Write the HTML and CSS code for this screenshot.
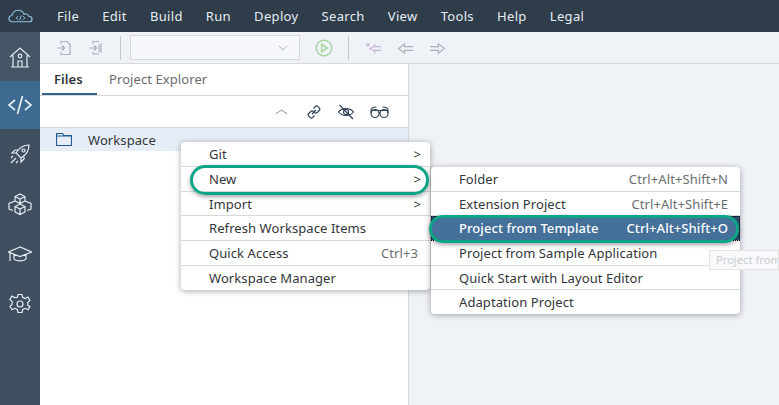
FILE: index.html
```html
<!DOCTYPE html>
<html lang="en">
<head>
  <meta charset="UTF-8">
  <title>Web IDE</title>
  <link rel="stylesheet" href="styles.css">
</head>
<body>
  <header class="menubar">
    <svg class="logo" viewBox="0 0 26 14"><path d="M6 13H4.500C2.500 13 1 11.500 1 9.700 1 8 2.300 6.700 4 6.500 5 3 7.500 1 10.500 1 13.500 1 15.800 2.800 16.700 5.200 17.300 4.900 18 4.800 18.800 4.900 20.500 5.100 21.500 6.200 21.800 7.300 23.700 7.500 25 8.700 25 10.300 25 11.900 23.500 13 22 13Z"/><path d="M10.500 7 8.500 9l2 2M15.500 7l2 2-2 2M13.800 6.500l-1.600 5" stroke-width="1"/></svg>
    <nav class="menus">
      <span>File</span><span>Edit</span><span>Build</span><span>Run</span><span>Deploy</span><span>Search</span><span>View</span><span>Tools</span><span>Help</span><span>Legal</span>
    </nav>
  </header>
  <div class="body-row">
    <aside class="sidebar">
      <div class="side-item home">
        <svg viewBox="0 0 24 24"><path d="M2 12 12 3l10 9M5 10.500V22h14V10.500M10 22v-6h4v6M3 22h18"/><circle cx="12" cy="11" r="1.800"/></svg>
      </div>
      <div class="side-item active">
        <svg viewBox="0 0 24 24"><path d="M7 7 1 12l6 5M17 7l6 5-6 5M14.500 3l-5 18" stroke-width="1.700"/></svg>
      </div>
      <div class="side-item">
        <svg viewBox="0 0 24 24"><path d="M21 3c-6 0-10 3-13 8l5 5c5-3 8-7 8-13ZM8 11H4l3-3h4M13 16v4l3-3v-4"/><circle cx="15.500" cy="8.500" r="1.500"/><path d="M3 21l5-5M3 16l2-2M8 21l2-2"/></svg>
      </div>
      <div class="side-item">
        <svg viewBox="0 0 24 24"><path d="M12 2 17 4.500V9l-5 2.500L7 9V4.500ZM7 4.500l5 2.500 5-2.500M12 7v4.500M7 9 1 11.500V17l4 1.500M17 9l6 2.500V17l-4 1.500M12 12 7 14.500V20l5 2.500 5-2.500v-5.500ZM7 14.500 12 17l5-2.500M12 17v5.500"/></svg>
      </div>
      <div class="side-item">
        <svg viewBox="0 0 24 24"><path d="M12 5 .5 10 12 14.500 23.500 10ZM6 12.500V17c2 2.500 10 2.500 12 0v-4.500M2 11v8"/></svg>
      </div>
      <div class="side-item">
        <svg viewBox="0 0 24 24"><circle cx="12" cy="12" r="3"/><path d="M10 2h4l.7 3 2.500 1.100 2.700-1.600 2 3.400-2.200 2.100v2.800L22 13.900l-2 3.400-2.700-1.500-2.600 1.200-.7 3h-4l-.7-3-2.600-1.200L4 17.300l-2-3.400 2.100-2.100V9L1.900 6.900l2-3.400 2.700 1.600L9.300 5Z" transform="translate(0 .5)"/></svg>
      </div>
    </aside>
    <main class="workarea">
      <div class="toolbar">
        <svg class="tool first" viewBox="0 0 16 16"><path d="M5 4V1.500h6L14 4.500v10H5V12M1 8h7M6 5.500 8.500 8 6 10.500"/></svg>
        <svg class="tool" viewBox="0 0 16 16"><path d="M5 4V1.500h6M13 3v10M5 12v2h6M1 8h7M6 5.500 8.500 8 6 10.500M11 4.500V12"/></svg>
        <span class="divider"></span>
        <div class="select">
          <svg viewBox="0 0 12 7"><path d="M1 1l5 5 5-5"/></svg>
        </div>
        <svg class="run" viewBox="0 0 18 18"><circle cx="9" cy="9" r="7.800"/><path d="M6.800 5.300 12.500 9l-5.700 3.700Z"/></svg>
        <span class="divider"></span>
        <svg class="nav-icon purple" viewBox="0 0 18 14"><path d="M17 5H9L11 2M17 9H9l2 3M9 5 5 7l4 2"/><circle cx="3" cy="3" r="1.300"/></svg>
        <svg class="nav-icon" viewBox="0 0 18 14"><path d="M17 5H8V2L1.500 7 8 12V9h9"/></svg>
        <svg class="nav-icon" viewBox="0 0 18 14"><path d="M1 5h9V2l6.500 5L10 12V9H1"/></svg>
      </div>
      <div class="split">
        <section class="files-pane">
          <div class="tabs">
            <span class="tab selected">Files</span>
            <span class="tab">Project Explorer</span>
          </div>
          <div class="tree-tools">
            <svg class="chevron" viewBox="0 0 14 7"><path d="M1 6l6-4 6 4"/></svg>
            <svg viewBox="0 0 16 16"><path d="M6 10l4-4M7.500 4.500l2-2.200c1.500-1.500 5.500 2.500 4 4l-2.300 2.200c-1 1-2.200.7-3-.2M8.500 11.500l-2 2.200c-1.500 1.500-5.500-2.500-4-4l2.300-2.200c1-1 2.200-.7 3 .2"/></svg>
            <svg viewBox="0 0 16 16"><path d="M.5 8C4 3.500 12 3.500 15.500 8 12 12.500 4 12.500.5 8Z"/><circle cx="8" cy="8" r="2.500"/><path d="M1.500 1 15 15"/></svg>
            <svg class="glasses" viewBox="0 0 19 16"><circle cx="5" cy="9.500" r="4"/><circle cx="14" cy="9.500" r="4"/><path d="M1 9V6.500C1 4 3 3 6.500 3M18 9V6.500C18 4 16 3 12.500 3M9 8.500h1M1 6.500h17"/></svg>
          </div>
          <div class="tree-row">
            <svg viewBox="0 0 16 13"><path d="M.5 12.500V.5h6l1.500 2h7.500v10ZM.5 3h15"/></svg>
            <span>Workspace</span>
          </div>
        </section>
        <section class="editor-pane"></section>
      </div>
    </main>
  </div>

  <ul class="ctx-menu main-menu">
    <li>Git<b>&gt;</b></li>
    <li>New<b>&gt;</b></li>
    <li>Import<b>&gt;</b></li>
    <li>Refresh Workspace Items</li>
    <li>Quick Access<em>Ctrl+3</em></li>
    <li class="last">Workspace Manager</li>
  </ul>
  <ul class="ctx-menu sub-menu">
    <li>Folder<em>Ctrl+Alt+Shift+N</em></li>
    <li>Extension Project<em>Ctrl+Alt+Shift+E</em></li>
    <li class="hot">Project from Template<em>Ctrl+Alt+Shift+O</em></li>
    <li>Project from Sample Application</li>
    <li>Quick Start with Layout Editor</li>
    <li class="last">Adaptation Project</li>
  </ul>
  <div class="tooltip">Project from</div>
  <div class="callout callout-new"></div>
  <div class="callout callout-template"></div>
</body>
</html>
```
FILE: styles.css
```css
html, body {
  margin: 0;
  padding: 0;
  width: 779px;
  height: 405px;
  overflow: hidden;
  background: #fff;
  font-family: 'Noto Sans', sans-serif;
  font-size: 13px;
  letter-spacing: .08px;
  color: #32363a;
}
svg {
  fill: none;
  stroke-width: 1.2;
}
.menubar {
  height: 32px;
  background: #2f3c4a;
  display: flex;
  align-items: center;
}
.logo {
  width: 25px;
  height: 14px;
  margin-left: 8px;
  stroke: #8fc0e0;
}
.menus {
  display: flex;
  gap: 23.1px;
  margin-left: 24px;
  color: #e6edf3;
  letter-spacing: .33px;
}
.body-row {
  display: flex;
  height: 373px;
}
.sidebar {
  width: 40px;
  background: #3f4f5f;
  display: flex;
  flex-direction: column;
}
.side-item {
  height: 50px;
  display: flex;
  align-items: center;
  justify-content: center;
}
.side-item svg {
  width: 24px;
  height: 24px;
  stroke: #e4edf3;
}
.side-item.home {
  height: 49px;
  background: #445565;
}
.side-item.active {
  height: 48px;
  background: #3d6a91;
}
.workarea {
  flex: 1;
  display: flex;
  flex-direction: column;
}
.toolbar {
  height: 31px;
  background: #eff2f7;
  border-bottom: 1px solid #d5d9de;
  display: flex;
  align-items: center;
}
.tool {
  width: 16px;
  height: 16px;
  stroke: #a6b1bc;
  margin-right: 16px;
}
.tool.first {
  margin-left: 16px;
}
.divider {
  width: 1px;
  height: 24px;
  background: #c4c9cf;
}
.select {
  width: 168px;
  height: 23px;
  margin-left: 9px;
  background: #f7f8fb;
  border: 1px solid #d5d9de;
  display: flex;
  align-items: center;
  justify-content: flex-end;
}
.select svg {
  width: 10px;
  height: 6px;
  stroke: #a6b1bc;
  margin-right: 11px;
}
.run {
  width: 18px;
  height: 18px;
  margin: 0 15px;
  stroke: #a5d6a0;
  stroke-width: 1.5;
}
.nav-icon {
  width: 17px;
  height: 13px;
  stroke: #a6b1bc;
  margin: 2px 0 0 15px;
}
.nav-icon.purple {
  stroke: #c8b4d8;
  margin-left: 16px;
}
.split {
  flex: 1;
  display: flex;
}
.files-pane {
  width: 368px;
  border-right: 1px solid #d5d9de;
}
.editor-pane {
  flex: 1;
  background: #eff2f7;
}
.tabs {
  height: 31px;
  border-bottom: 1px solid #d5d9de;
  display: flex;
  align-items: stretch;
}
.tab {
  padding: 0 12px;
  line-height: 30px;
  color: #6a6d70;
  height: 31px;
  box-sizing: border-box;
}
.tab.selected {
  width: 55px;
  margin-left: 2px;
  color: #32363a;
  font-weight: 600;
  border-bottom: 2px solid #366488;
}
.tree-tools {
  height: 31px;
  border-bottom: 1px solid #d5d9de;
  display: flex;
  align-items: center;
  justify-content: flex-end;
  gap: 16px;
  padding-right: 19px;
}
.tree-tools svg {
  width: 16px;
  height: 16px;
  stroke: #32435a;
}
.tree-tools svg.chevron {
  width: 13px;
  height: 7px;
  margin-right: 2px;
  stroke: #9aa5b0;
}
.tree-tools svg.glasses {
  width: 19px;
}
.tree-row {
  height: 23px;
  background: #e6edf6;
  display: flex;
  align-items: center;
  padding-left: 16px;
  gap: 16px;
}
.tree-row svg {
  width: 16px;
  height: 13px;
  stroke: #1f5c94;
}
.ctx-menu {
  list-style: none;
  margin: 0;
  padding: 0;
  position: absolute;
  background: #fff;
  border-radius: 4px;
  box-shadow: 0 1px 6px rgba(0, 0, 0, .35);
  white-space: nowrap;
  display: flex;
  flex-direction: column;
}
.ctx-menu li {
  flex: 1;
  box-sizing: border-box;
  padding: 0 12px 0 28px;
  border-bottom: 1px solid #d5d9de;
  display: flex;
  align-items: center;
  justify-content: space-between;
}
.ctx-menu li.last {
  border-bottom: 0;
}
.ctx-menu em {
  font-style: normal;
  color: #6a6d70;
}
.ctx-menu b {
  font-weight: 400;
  margin-right: -3px;
}
.main-menu {
  left: 181px;
  top: 142px;
  width: 249px;
  height: 148px;
}
.sub-menu {
  left: 431px;
  top: 167px;
  width: 309px;
  height: 147px;
}
.ctx-menu li.hot {
  background: #2c4f70;
  color: #fff;
  font-weight: 500;
  outline: 1px dotted #000;
  outline-offset: -1px;
  position: relative;
  isolation: isolate;
}
/* lighter fill inside the green callout */
.ctx-menu li.hot::before {
  content: "";
  position: absolute;
  inset: 0 1px 0 0;
  z-index: -1;
  border-radius: 13px;
  background: #44709a;
}
.ctx-menu li.hot em {
  color: #fff;
}
.tooltip {
  position: absolute;
  left: 709px;
  top: 250px;
  width: 70px;
  height: 20px;
  box-sizing: border-box;
  border: 1px solid #e3e3e3;
  background: #f8f9fb;
  color: #c9ccd0;
  font-size: 11px;
  line-height: 18px;
  padding-left: 6px;
  overflow: hidden;
  white-space: nowrap;
}
.callout {
  position: absolute;
  border: 3px solid #0ea587;
  border-radius: 15px;
  box-shadow: 0 2px 4px rgba(0, 0, 0, .35);
  box-sizing: border-box;
}
.callout-new {
  left: 190px;
  top: 165px;
  width: 239px;
  height: 30px;
}
.callout-template {
  left: 429px;
  top: 215px;
  width: 310px;
  height: 28px;
}
```
